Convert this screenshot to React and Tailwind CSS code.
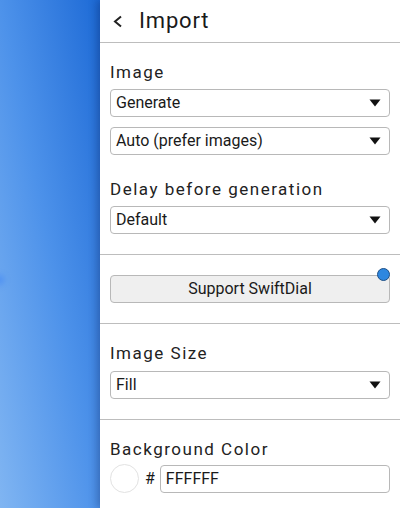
import React from 'react';

const font = { fontFamily: 'Roboto, "Noto Sans", sans-serif' };

const Caret = () => (
  <svg width="12" height="8" viewBox="0 0 12 8" className="shrink-0">
    <path d="M0.5 0.5 L11.5 0.5 L6 7.5 Z" fill="#111" />
  </svg>
);

const Select = ({ value, className = '' }) => (
  <div
    className={`h-[28px] w-full flex items-center justify-between pl-[5px] pr-[8px] border border-[#b8b8b8] rounded-[4px] bg-white text-[16px] text-[#1a1a1a] ${className}`}
  >
    <span>{value}</span>
    <Caret />
  </div>
);

const Label = ({ children, className = '' }) => (
  <div className={`text-[17px] leading-[20px] tracking-[1.5px] text-[#222] ${className}`}>{children}</div>
);

const App = () => {
  return (
    <div className="w-[400px] h-[508px] flex overflow-hidden bg-white" style={font}>
      {/* Backdrop */}
      <div className="relative w-[100px] shrink-0 bg-linear-to-tr from-[#80b5f2] via-[#4d92ea] to-[#1c6ad6]">
        <div className="absolute left-[-6px] top-[275px] w-[10px] h-[10px] rounded-full bg-[#3b82f6] blur-[3px] opacity-60" />
      </div>

      {/* Settings panel */}
      <div className="relative w-[300px] shrink-0 bg-white shadow-[-3px_0_8px_rgba(0,0,40,0.25)]">
        <div className="h-[43px] flex items-center border-b border-[#bdbdbd]">
          <svg width="10" height="13" viewBox="0 0 10 13" className="ml-[13px]">
            <polyline points="8,1.5 2,6.5 8,11.5" fill="none" stroke="#222" strokeWidth="2" />
          </svg>
          <span className="ml-[16px] text-[22px] leading-[42px] tracking-[0.8px] text-[#1a1a1a]">Import</span>
        </div>

        <div className="px-[10px] pt-[19px] pb-[20px] border-b border-[#bdbdbd]">
          <Label>Image</Label>
          <Select value="Generate" className="mt-[7px]" />
          <Select value="Auto (prefer images)" className="mt-[10px]" />
          <Label className="mt-[24px]">Delay before generation</Label>
          <Select value="Default" className="mt-[7px]" />
        </div>

        <div className="px-[10px] py-[20px] border-b border-[#bdbdbd]">
          <div className="relative h-[28px] w-full flex items-center justify-center border border-[#b8b8b8] rounded-[4px] bg-[#efefef] text-[16px] text-[#1a1a1a]">
            Support SwiftDial
            <div className="absolute -top-[8px] -right-[1px] w-[13px] h-[13px] rounded-full bg-[#2d87e0] border border-[#1d4f86]" />
          </div>
        </div>

        <div className="px-[10px] pt-[19px] pb-[20px] border-b border-[#bdbdbd]">
          <Label>Image Size</Label>
          <Select value="Fill" className="mt-[8px]" />
        </div>

        <div className="px-[10px] pt-[19px]">
          <Label>Background Color</Label>
          <div className="mt-[5px] flex items-center">
            <div className="w-[29px] h-[29px] rounded-full bg-white border border-[#e2e2e2]" />
            <span className="ml-[6px] text-[16px] text-[#1a1a1a]">#</span>
            <div className="ml-[5px] flex-1 h-[28px] flex items-center pl-[5px] border border-[#b8b8b8] rounded-[4px] bg-white text-[16px] text-[#1a1a1a]">
              FFFFFF
            </div>
          </div>
        </div>
      </div>
    </div>
  );
};

export default App;
